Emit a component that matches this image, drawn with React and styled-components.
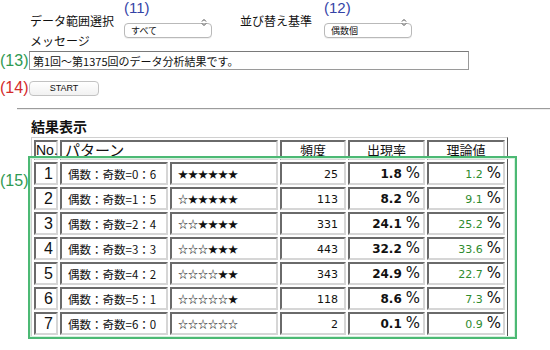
import React from "react";
import styled, { createGlobalStyle } from "styled-components";

const GlobalStyle = createGlobalStyle`
  body {
    margin: 0;
    background: #ffffff;
    color: #111111;
    font-family: "Noto Sans CJK JP", sans-serif;
  }
`;

const Page = styled.div`
  width: 550px;
  height: 350px;
  overflow: hidden;
`;

const ControlRow = styled.div`
  display: flex;
  align-items: flex-end;
  padding-left: 30px;
  height: 30px;
`;

const FieldLabel = styled.span`
  font-size: 12px;
  line-height: 16px;
  margin-bottom: 1px;
  margin-right: ${(p) => p.gap || 10}px;
`;

const SelectGroup = styled.div`
  display: flex;
  flex-direction: column;
  margin-right: ${(p) => p.after || 0}px;
`;

const Note = styled.span`
  font-family: "Liberation Sans", Arial, sans-serif;
  font-size: ${(p) => p.size || 16}px;
  line-height: ${(p) => p.size || 16}px;
  color: ${(p) => p.color};
  width: ${(p) => (p.width ? p.width + "px" : "auto")};
  flex-shrink: 0;
`;

const SelectBox = styled.div`
  position: relative;
  width: 88px;
  height: 15px;
`;

const Select = styled.select`
  appearance: none;
  width: 100%;
  height: 100%;
  border: 1px solid #b9b9b9;
  border-radius: 4px;
  background: #ffffff;
  font-family: "Noto Sans CJK JP", sans-serif;
  font-size: 9px;
  padding: 0 0 0 6px;
  color: #111;
  box-shadow: 0 1px 0 rgba(0, 0, 0, 0.06);
`;

const Chevrons = styled.svg`
  position: absolute;
  right: 5px;
  top: 3px;
  pointer-events: none;
`;

const MessageLabel = styled.div`
  padding-left: 30px;
  margin-top: 3px;
  font-size: 12px;
  line-height: 16px;
`;

const NoteRow = styled.div`
  display: flex;
  align-items: center;
  margin-top: ${(p) => p.top}px;
`;

const MessageInput = styled.input`
  width: 440px;
  height: 19px;
  box-sizing: border-box;
  border: 1px solid #9a9a9a;
  border-top-color: #7a7a7a;
  padding: 0 3px;
  font-family: "Noto Sans CJK JP", sans-serif;
  font-size: 11px;
  color: #111;
`;

const StartButton = styled.button`
  width: 70px;
  height: 15px;
  padding: 0;
  border: 1px solid #c2c2c2;
  border-radius: 4px;
  background: linear-gradient(#ffffff, #f1f1f1);
  font-family: "Liberation Sans", Arial, sans-serif;
  font-size: 9px;
  line-height: 13px;
  color: #111;
`;

const Rule = styled.hr`
  margin: 12px 0 0 17px;
  border: 0;
  border-top: 1px solid #9c9c9c;
  border-bottom: 1px solid #eeeeee;
`;

const SectionTitle = styled.h2`
  margin: 7px 0 0 31px;
  font-size: 14px;
  line-height: 18px;
  font-weight: 700;
`;

const TableArea = styled.div`
  position: relative;
  margin: 2px 0 0 31px;
  width: 477px;
`;

const Highlight = styled.div`
  position: absolute;
  left: -3px;
  top: 19px;
  width: 489px;
  height: 183px;
  box-sizing: border-box;
  border: 2px solid #4cb974;
  box-shadow: inset 0 0 0 1px #d8f0df;
  pointer-events: none;
`;

const SideNote = styled(Note)`
  position: absolute;
  left: -31px;
  top: 36px;
`;

const Table = styled.table`
  table-layout: fixed;
  width: 477px;
  border-collapse: separate;
  border-spacing: 2px;
  border: 1px solid;
  border-color: #d0d0d0 #555555 #555555 #d0d0d0;
`;

const Head = styled.th`
  box-sizing: border-box;
  height: 20px;
  padding: 0 ${(p) => p.pad ?? 3}px;
  border: 2px solid;
  border-color: #6a6a6a #d6d6d6 #d6d6d6 #6a6a6a;
  font-weight: 400;
  font-size: ${(p) => p.size || 13}px;
  text-align: ${(p) => p.align || "center"};
  font-family: ${(p) =>
    p.latin ? '"Liberation Sans", Arial, sans-serif' : '"Noto Sans CJK JP", sans-serif'};
  line-height: 14px;
  white-space: nowrap;
`;

const Cell = styled.td`
  box-sizing: border-box;
  height: 23px;
  padding: 0 ${(p) => p.pr || 4}px 0 ${(p) => p.pl || 4}px;
  border: 2px solid;
  border-color: #6a6a6a #d6d6d6 #d6d6d6 #6a6a6a;
  text-align: ${(p) => p.align || "left"};
  white-space: nowrap;
  overflow: hidden;
  font-size: 11px;
  line-height: 14px;
`;

const RowNo = styled.span`
  font-family: "Liberation Sans", Arial, sans-serif;
  font-size: 16px;
  line-height: 14px;
`;

const Pattern = styled.span`
  font-family: "Noto Sans CJK JP", sans-serif;
  font-size: 11.5px;
  line-height: 14px;
`;

const Stars = styled.span`
  font-family: "Noto Sans CJK JP", sans-serif;
  font-size: 10px;
  line-height: 14px;
`;

const Num = styled.span`
  font-family: "DejaVu Sans", Verdana, sans-serif;
  font-size: ${(p) => p.size || 11}px;
  font-weight: ${(p) => (p.bold ? 700 : 400)};
  color: ${(p) => p.color || "#111"};
  line-height: 14px;
`;

const Percent = styled.span`
  font-family: "DejaVu Sans", Verdana, sans-serif;
  font-size: 15px;
  line-height: 14px;
  margin-left: 4px;
`;

const rows = [
  { no: 1, even: 0, odd: 6, count: 25, rate: "1.8", theory: "1.2" },
  { no: 2, even: 1, odd: 5, count: 113, rate: "8.2", theory: "9.1" },
  { no: 3, even: 2, odd: 4, count: 331, rate: "24.1", theory: "25.2" },
  { no: 4, even: 3, odd: 3, count: 443, rate: "32.2", theory: "33.6" },
  { no: 5, even: 4, odd: 2, count: 343, rate: "24.9", theory: "22.7" },
  { no: 6, even: 5, odd: 1, count: 118, rate: "8.6", theory: "7.3" },
  { no: 7, even: 6, odd: 0, count: 2, rate: "0.1", theory: "0.9" },
];

const ChevronIcon = () => (
  <Chevrons width="6" height="9" viewBox="0 0 6 9">
    <path d="M1 3.5 L3 1.5 L5 3.5 M1 5.5 L3 7.5 L5 5.5" fill="none" stroke="#444" strokeWidth="1" />
  </Chevrons>
);

const App = () => {
  return (
    <Page>
      <GlobalStyle />
      <ControlRow>
        <FieldLabel>データ範囲選択</FieldLabel>
        <SelectGroup after={28}>
          <Note size={15} color="#3443a6">(11)</Note>
          <SelectBox>
            <Select defaultValue="all">
              <option value="all">すべて</option>
            </Select>
            <ChevronIcon />
          </SelectBox>
        </SelectGroup>
        <FieldLabel gap={12}>並び替え基準</FieldLabel>
        <SelectGroup>
          <Note size={15} color="#3443a6">(12)</Note>
          <SelectBox>
            <Select defaultValue="even">
              <option value="even">偶数個</option>
            </Select>
            <ChevronIcon />
          </SelectBox>
        </SelectGroup>
      </ControlRow>
      <MessageLabel>メッセージ</MessageLabel>
      <NoteRow top={2}>
        <Note width={29} color="#2f9a52">(13)</Note>
        <MessageInput readOnly value="第1回～第1375回のデータ分析結果です。" />
      </NoteRow>
      <NoteRow top={10}>
        <Note width={29} color="#d42a2a">(14)</Note>
        <StartButton>START</StartButton>
      </NoteRow>
      <Rule />
      <SectionTitle>結果表示</SectionTitle>
      <TableArea>
        <Table>
          <colgroup>
            <col style={{ width: 24 }} />
            <col style={{ width: 108 }} />
            <col style={{ width: 108 }} />
            <col style={{ width: 66 }} />
            <col style={{ width: 77 }} />
            <col style={{ width: 78 }} />
          </colgroup>
          <thead>
            <tr>
              <Head latin size={14} align="left" pad={0}>No.</Head>
              <Head colSpan={2} size={15} align="left">パターン</Head>
              <Head>頻度</Head>
              <Head>出現率</Head>
              <Head>理論値</Head>
            </tr>
          </thead>
          <tbody>
            {rows.map((r) => (
              <tr key={r.no}>
                <Cell align="right" pr={3}>
                  <RowNo>{r.no}</RowNo>
                </Cell>
                <Cell pl={6}>
                  <Pattern>偶数：奇数={r.even}：{r.odd}</Pattern>
                </Cell>
                <Cell pl={6}>
                  <Stars>{"☆".repeat(r.even) + "★".repeat(r.odd)}</Stars>
                </Cell>
                <Cell align="right" pr={6}>
                  <Num>{r.count}</Num>
                </Cell>
                <Cell align="right" pr={3}>
                  <Num bold size={12}>{r.rate}</Num>
                  <Percent>%</Percent>
                </Cell>
                <Cell align="right" pr={2}>
                  <Num color="#2e8b2e">{r.theory}</Num>
                  <Percent>%</Percent>
                </Cell>
              </tr>
            ))}
          </tbody>
        </Table>
        <Highlight />
        <SideNote color="#2f9a52">(15)</SideNote>
      </TableArea>
    </Page>
  );
};

export default App;
